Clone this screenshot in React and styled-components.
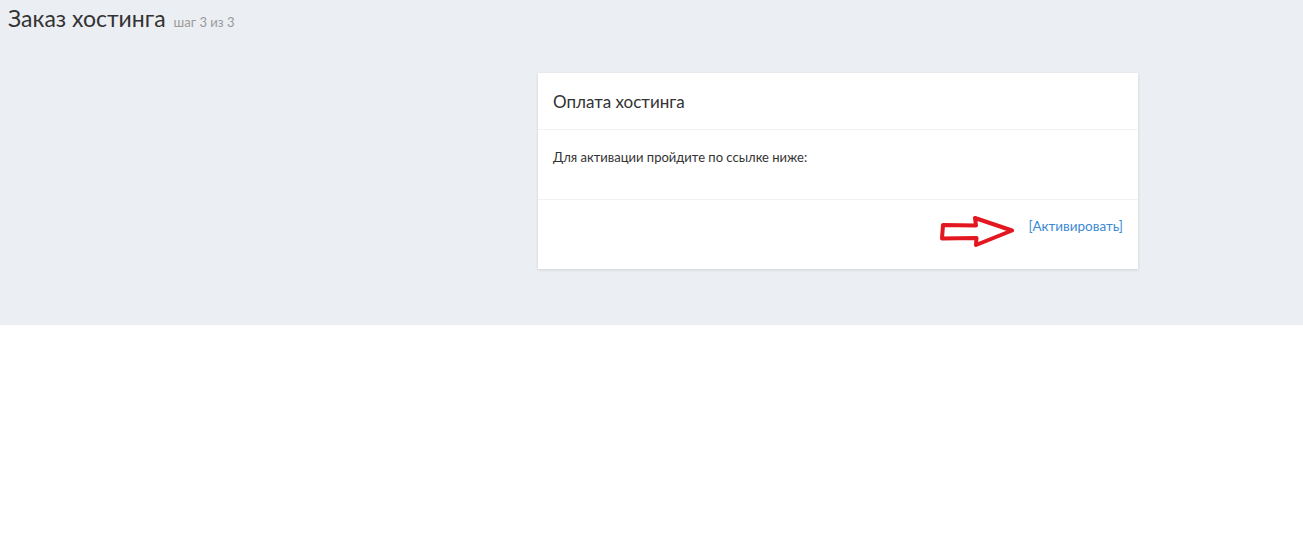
import React from 'react';
import styled, { createGlobalStyle } from 'styled-components';

const Global = createGlobalStyle`
    html, body {
        margin: 0;
        padding: 0;
        background: #ffffff;
        font-family: Lato, "Noto Sans", "Liberation Sans", sans-serif;
        color: #333333;
    }
`;

const Content = styled.div`
    background: #ebeef3;
    height: 325px;
    padding: 0 8px;
    box-sizing: border-box;
`;

const Heading = styled.h1`
    margin: 0;
    padding-top: 5px;
    font-size: 23px;
    font-weight: 400;
    line-height: 26px;
    color: #333333;
`;

const Step = styled.small`
    font-size: 13px;
    color: #9a9a9a;
    margin-left: 8px;
`;

const Grid = styled.div`
    display: grid;
    grid-template-columns: 530px 600px;
    margin-top: 38px;
`;

const Box = styled.div`
    grid-column: 2;
    background: #ffffff;
    box-shadow: 0 1px 3px rgba(0, 0, 0, 0.12);
`;

const BoxHeader = styled.div`
    height: 56px;
    display: flex;
    align-items: center;
    padding: 0 15px;
    border-bottom: 1px solid #f2f2f2;
    font-size: 17px;
    color: #333333;
`;

const BoxBody = styled.div`
    height: 70px;
    padding: 18px 15px 0;
    box-sizing: border-box;
    border-bottom: 1px solid #f2f2f2;
    font-size: 13px;
    line-height: 18px;
    color: #333333;
`;

const BoxFooter = styled.div`
    height: 69px;
    padding: 17px 15px 0;
    display: flex;
    justify-content: flex-end;
    align-items: flex-start;
    box-sizing: border-box;
    gap: 13px;
`;

const Link = styled.a`
    font-size: 13.5px;
    color: #3a8ad6;
    text-decoration: none;
    line-height: 18px;
`;

const Arrow = styled.svg`
    display: block;
    margin-top: -1px;
`;

function RedArrow() {
    return (
        <Arrow width="76" height="34" viewBox="0 0 76 34">
            <path
                d="M4 9 L37 9.5 L36 2 L73 14.5 L37 29 L37.5 22 L3 22.5 Z"
                fill="none"
                stroke="#e3171f"
                strokeWidth="4"
                strokeLinejoin="round"
            />
        </Arrow>
    );
}

export default function App() {
    return (
        <>
            <Global />
            <Content>
                <Heading>Заказ хостинга<Step>шаг 3 из 3</Step></Heading>
                <Grid>
                    <Box>
                        <BoxHeader>Оплата хостинга</BoxHeader>
                        <BoxBody>Для активации пройдите по ссылке ниже:</BoxBody>
                        <BoxFooter>
                            <RedArrow />
                            <Link href="#">[Активировать]</Link>
                        </BoxFooter>
                    </Box>
                </Grid>
            </Content>
        </>
    );
}
